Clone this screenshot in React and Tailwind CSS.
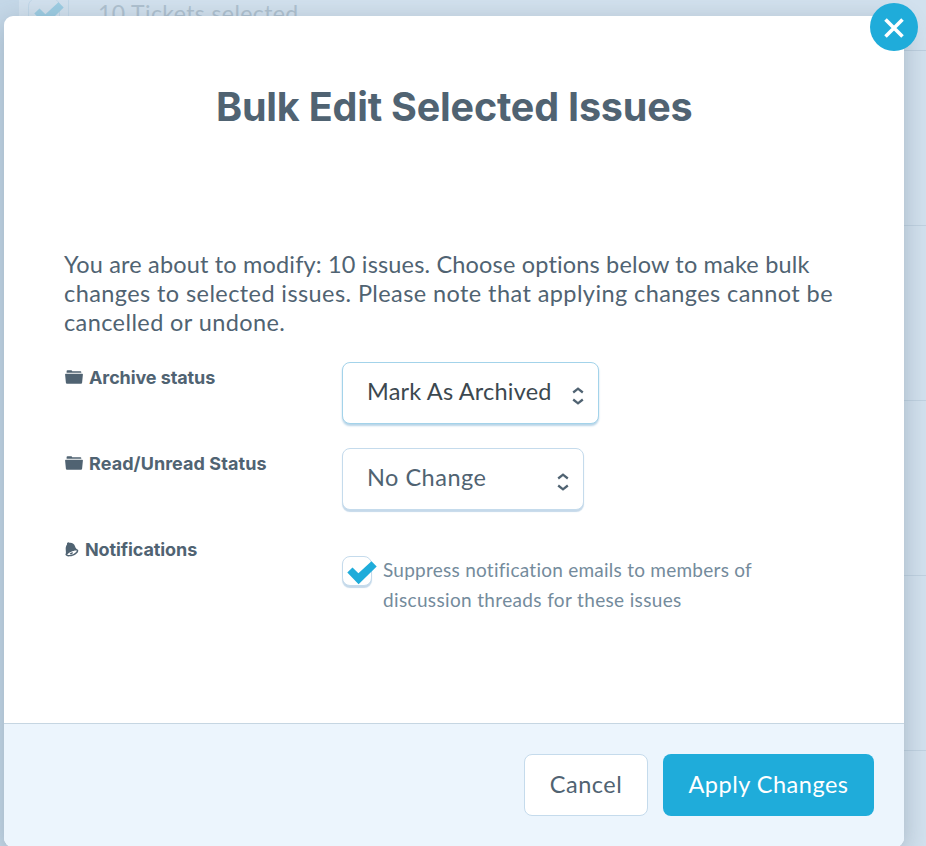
import React, { useState } from "react";

const FolderIcon = () => (
  <svg viewBox="0 0 18 14" className="mb-px ml-px h-[14px] w-[18px] shrink-0" fill="currentColor">
    <path d="M1.6 2.7V1.2Q1.6.3 2.5.3H6.2Q7 .3 7.2 1.3H15.4Q16.3 1.3 16.3 2.2V2.7Z" />
    <path d="M.8 3.7H17.2Q18 3.7 17.9 4.5L17.1 12.8Q17 13.8 16 13.8H2Q1 13.8 .9 12.8L.1 4.5Q0 3.7 .8 3.7Z" />
  </svg>
);

const BellIcon = () => (
  <svg viewBox="0 0 14 15" className="ml-px h-[15px] w-[14px] shrink-0">
    <path
      d="M2 1.2Q3.2-.3 4.5.8C7.2 .5 9.3 1.9 10 4.2C10.5 6.2 11.6 7 13 7.8C14.6 10.3 9.2 14.3 5 14.3C2.4 14.6.7 14 .4 12.6C1.6 10.2.3 8.1.8 5.3Q1.1 3.2 2 2.4Z"
      fill="currentColor"
    />
    <path
      d="M2.2 12.7C3.3 10.8 8.7 8.2 11.8 8.6C12.1 10.1 8 12.9 4.5 13.1Q3 13.2 2.2 12.7Z"
      fill="#fff"
    />
    <path d="M4.7 11.4L7.5 10.1Q8.4 11.5 7 12.1Q5.6 12.7 4.7 11.4Z" fill="currentColor" />
  </svg>
);

const CheckIcon = ({ className }) => (
  <svg viewBox="0 0 30 24" className={className} fill="currentColor">
    <path d="M.3 11.6L5.5 6.5L11.4 12.3L24.5.3L29.7 5.4L11.6 23.2Z" />
  </svg>
);

const SelectArrows = () => (
  <svg
    viewBox="0 0 12 18"
    className="mt-[6px] h-[18px] w-3 shrink-0 text-[#506372]"
    fill="none"
    stroke="currentColor"
    strokeWidth="2.3"
  >
    <path d="M1.2 5.5L6 1.7L10.8 5.5M1.2 12.5L6 16.3L10.8 12.5" />
  </svg>
);

const FieldRow = ({ icon, label, labelClass, children }) => (
  <div className="flex h-[86px] items-start">
    <div className="flex h-[31px] w-[278px] items-center font-['Inter',sans-serif] text-[18px] font-bold whitespace-nowrap">
      {icon}
      <span className={labelClass}>{label}</span>
    </div>
    {children}
  </div>
);

const Backdrop = () => (
  <div className="absolute inset-0 bg-[#c5d8e8]">
    <div className="ml-[19px] h-[51px] border-b border-[#bdcfdf] bg-[#d2e1ee]">
      <div className="flex h-full">
        <div className="w-[50px] border-r border-[#c2d8e8] pl-[9px]">
          <div className="-mt-[2px] h-8 w-8 rounded-lg border border-[#c0d7e8] pt-[3px] pl-[5px]">
            <CheckIcon className="h-6 w-[30px] text-[#9dcde3]" />
          </div>
        </div>
        <div className="pl-[29px] text-[23px] leading-[27px] tracking-[0.4px] whitespace-nowrap text-[#afc1d0]">
          10 Tickets selected
        </div>
      </div>
    </div>
    <div className="ml-[19px] h-[175px] border-b border-[#c0d2e1] bg-[#d2e1ee]" />
    <div className="ml-[19px] h-[175px] border-b border-[#c0d2e1] bg-[#d2e1ee]" />
    <div className="ml-[19px] h-[175px] border-b border-[#c0d2e1] bg-[#d2e1ee]" />
    <div className="ml-[19px] h-[175px] border-b border-[#c0d2e1] bg-[#d2e1ee]" />
    <div className="ml-[19px] h-[95px] bg-[#d2e1ee]" />
  </div>
);

const App = () => {
  const [suppress, setSuppress] = useState(true);

  return (
    <div className="relative h-[846px] w-[926px] overflow-hidden font-['Lato',sans-serif] text-[#506372]">
      <Backdrop />

      <div className="relative mt-4 ml-1 flex h-[831px] w-[900px] flex-col rounded-[9px] bg-white shadow-[0_6px_26px_rgba(75,95,110,0.33)]">
        <button className="absolute -top-[13px] -right-[14px] flex h-12 w-12 items-center justify-center rounded-full bg-[#1facda]">
          <svg viewBox="0 0 20 20" className="mt-px h-5 w-5" stroke="#fff" strokeWidth="3.6">
            <path d="M1.5 1.5L18.5 18.5M18.5 1.5L1.5 18.5" />
          </svg>
        </button>

        <h1 className="mt-[66px] h-[49px] pl-[212px] font-['Inter',sans-serif] text-[39.5px] leading-[50px] font-bold tracking-[-0.2px] whitespace-nowrap">
          Bulk Edit Selected Issues
        </h1>

        <div className="flex-1 px-[60px] pt-[119px]">
          <p className="text-[23.5px] leading-[29px] whitespace-nowrap">
            <span className="block tracking-[0.17px]">
              You are about to modify: 10 issues. Choose options below to make bulk
            </span>
            <span className="block tracking-[0.41px]">
              changes to selected issues. Please note that applying changes cannot be
            </span>
            <span className="block tracking-[0.4px]">cancelled or undone.</span>
          </p>

          <div className="pt-[25px]">
            <FieldRow icon={<FolderIcon />} label="Archive status" labelClass="ml-[6px] tracking-[-0.1px]">
              <button className="flex h-[62px] w-[257px] items-center justify-between rounded-lg border border-[#a3d3ea] bg-white pr-[14px] pl-6 text-[23.5px] text-[#3c484f] shadow-[0_2px_2px_#b9d5e8]">
                <span className="pb-[2px] tracking-[0.2px] whitespace-nowrap">Mark As Archived</span>
                <SelectArrows />
              </button>
            </FieldRow>
            <FieldRow icon={<FolderIcon />} label="Read/Unread Status" labelClass="ml-[6px] tracking-[0.07px]">
              <button className="flex h-[62px] w-[242px] items-center justify-between rounded-lg border border-[#c5dbec] bg-white pr-[14px] pl-6 text-[23.5px] shadow-[0_2px_1px_#c5d9ea]">
                <span className="pb-[2px] tracking-[0.5px] whitespace-nowrap">No Change</span>
                <SelectArrows />
              </button>
            </FieldRow>
            <FieldRow icon={<BellIcon />} label="Notifications" labelClass="ml-[6px] tracking-[-0.1px]">
              <label className="flex pt-[22px]">
                <span className="h-[30px] w-[30px] shrink-0 rounded-lg border border-[#c5dbec] bg-white shadow-[0_2px_1px_#c5d9ea]">
                  <input
                    type="checkbox"
                    className="sr-only"
                    checked={suppress}
                    onChange={() => setSuppress(!suppress)}
                  />
                  {suppress && <CheckIcon className="mt-1 ml-1 h-6 w-[30px] max-w-none text-[#1facda]" />}
                </span>
                <span className="-mt-px ml-[11px] text-[19px] leading-[30px] whitespace-nowrap text-[#748b9c]">
                  <span className="block tracking-[0.25px]">Suppress notification emails to members of</span>
                  <span className="block tracking-[0.35px]">discussion threads for these issues</span>
                </span>
              </label>
            </FieldRow>
          </div>
        </div>

        <div className="flex h-[124px] justify-end gap-[15px] rounded-b-[9px] border-t border-[#c6d6e2] bg-[#ecf5fd] pt-[30px] pr-[30px] text-[23.5px]">
          <button className="h-[62px] w-[124px] rounded-lg border border-[#c5dbec] bg-white pb-px tracking-[0.5px]">
            Cancel
          </button>
          <button className="h-[62px] w-[211px] rounded-lg bg-[#1facda] pb-px tracking-[0.5px] whitespace-nowrap text-white">
            Apply Changes
          </button>
        </div>
      </div>
    </div>
  );
};

export default App;
